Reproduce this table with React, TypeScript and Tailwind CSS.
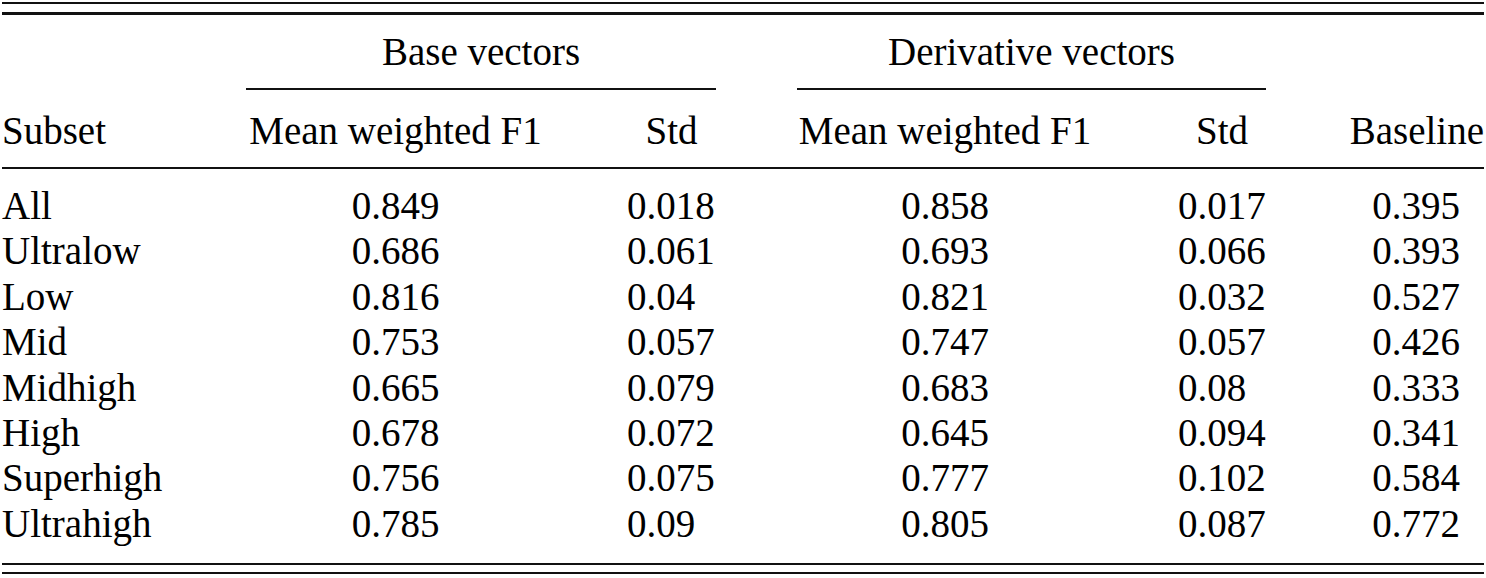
import React from 'react';

interface Row {
    subset: string;
    baseMean: string;
    baseStd: string;
    derivMean: string;
    derivStd: string;
    baseline: string;
}

const rows: Row[] = [
    { subset: 'All', baseMean: '0.849', baseStd: '0.018', derivMean: '0.858', derivStd: '0.017', baseline: '0.395' },
    { subset: 'Ultralow', baseMean: '0.686', baseStd: '0.061', derivMean: '0.693', derivStd: '0.066', baseline: '0.393' },
    { subset: 'Low', baseMean: '0.816', baseStd: '0.04', derivMean: '0.821', derivStd: '0.032', baseline: '0.527' },
    { subset: 'Mid', baseMean: '0.753', baseStd: '0.057', derivMean: '0.747', derivStd: '0.057', baseline: '0.426' },
    { subset: 'Midhigh', baseMean: '0.665', baseStd: '0.079', derivMean: '0.683', derivStd: '0.08', baseline: '0.333' },
    { subset: 'High', baseMean: '0.678', baseStd: '0.072', derivMean: '0.645', derivStd: '0.094', baseline: '0.341' },
    { subset: 'Superhigh', baseMean: '0.756', baseStd: '0.075', derivMean: '0.777', derivStd: '0.102', baseline: '0.584' },
    { subset: 'Ultrahigh', baseMean: '0.785', baseStd: '0.09', derivMean: '0.805', derivStd: '0.087', baseline: '0.772' },
];

const App: React.FC = () => {
    return (
        <div
            className="w-[1486px] h-[578px] bg-white text-black overflow-hidden"
            style={{ fontFamily: '"Liberation Serif", "Times New Roman", serif' }}
        >
            <div className="ml-[2px] w-[1482px] pt-[2px] text-[39px]">
                {/* top double rule */}
                <div className="h-[2px] bg-[#111]" />
                <div className="mt-[8px] h-[3px] bg-[#111]" />

                {/* spanning group headers */}
                <div className="mt-[14px] flex h-[45px] leading-[45px]">
                    <div className="w-[244px]" />
                    <div className="w-[470px] text-center">Base vectors</div>
                    <div className="w-[81px]" />
                    <div className="w-[469px] text-center">Derivative vectors</div>
                </div>
                <div className="mt-[14px] flex h-[2px]">
                    <div className="w-[244px]" />
                    <div className="w-[470px] bg-[#111]" />
                    <div className="w-[81px]" />
                    <div className="w-[469px] bg-[#111]" />
                </div>

                {/* column headers */}
                <div className="mt-[18px] flex h-[45px] leading-[45px]">
                    <div className="w-[244px]">Subset</div>
                    <div className="w-[299px] text-center whitespace-nowrap">Mean weighted F1</div>
                    <div className="w-[171px] pl-[82px] text-center">Std</div>
                    <div className="w-[377px] pl-[81px] text-center whitespace-nowrap">Mean weighted F1</div>
                    <div className="w-[173px] pl-[85px] text-center">Std</div>
                    <div className="w-[218px] pl-[82px] text-right">Baseline</div>
                </div>
                <div className="mt-[14px] h-[2px] bg-[#111]" />

                {/* body */}
                <div className="mt-[14px]">
                    {rows.map(r => (
                        <div key={r.subset} className="flex h-[45.4px] leading-[45.4px]">
                            <div className="w-[244px]">{r.subset}</div>
                            <div className="w-[299px] text-center">{r.baseMean}</div>
                            <div className="w-[171px] pl-[82px] text-left">{r.baseStd}</div>
                            <div className="w-[377px] pl-[81px] text-center">{r.derivMean}</div>
                            <div className="w-[173px] pl-[85px] text-left">{r.derivStd}</div>
                            <div className="w-[218px] pl-[82px] text-center">{r.baseline}</div>
                        </div>
                    ))}
                </div>

                {/* bottom double rule */}
                <div className="mt-[17px] h-[2px] bg-[#111]" />
                <div className="mt-[7px] h-[2px] bg-[#111]" />
            </div>
        </div>
    );
};

export default App;
